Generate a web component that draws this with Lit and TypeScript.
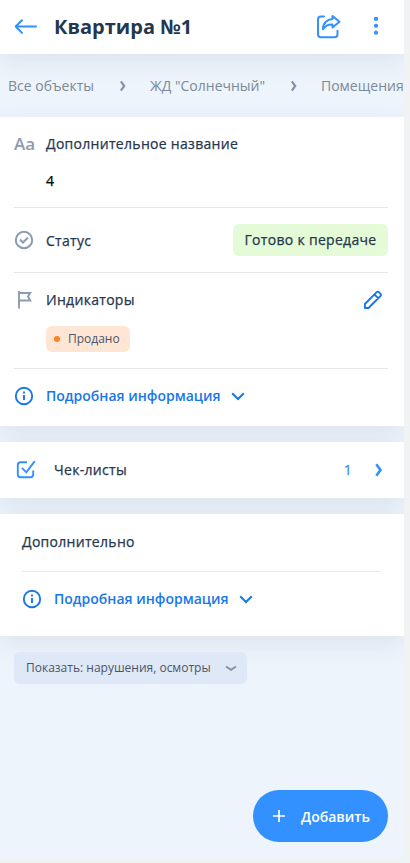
import { LitElement, html, css, svg } from "lit";
import { customElement } from "lit/decorators.js";

const infoIcon = svg`<svg class="ico" width="20" height="20" viewBox="0 0 20 20" fill="none" stroke="#1877e8" stroke-width="1.9"><circle cx="10" cy="10" r="8.2"/><path d="M10 8.9v5.2M10 5.6v1.9"/></svg>`;
const downIcon = svg`<svg class="down" width="14" height="9" viewBox="0 0 14 9" fill="none" stroke="#1877e8" stroke-width="2"><path d="M1.2 1.3L7 7l5.800-5.700"/></svg>`;
const crumbIcon = svg`<svg width="8" height="12" viewBox="0 0 8 12" fill="none" stroke="#8493a5" stroke-width="2.2"><path d="M1.900 1.400L5.200 6l-3.300 4.600"/></svg>`;

@customElement("app-root")
export class AppRoot extends LitElement {
  static styles = css`
    :host { display: block; height: 863px; background: #f1f2f4; overflow: hidden; font-family: "Open Sans", "Noto Sans", sans-serif; font-size: 14px; font-weight: 400; line-height: 20px; color: #25374e; }
    * { box-sizing: border-box; }
    svg { display: block; flex: none; }
    .page { position: relative; width: 404px; height: 858px; overflow: hidden; background: #edf4fc; }
    .page > header, .card { background: #fff; box-shadow: 0 8px 24px rgba(37, 55, 78, .085); }
    header { height: 54px; display: flex; align-items: center; padding: 0 20px 0 14px; }
    h1 { margin: 0 auto 0 16px; font-size: 20px; line-height: 28px; font-weight: 700; }
    .dots { margin-left: 27px; }
    nav { height: 63px; display: flex; align-items: center; padding-left: 8px; white-space: nowrap; color: #7d8997; }
    nav svg { margin: 0 23px 0 24.900px; }
    .main { height: 309px; padding: 0 16px 0 14px; }
    .name { height: 91px; padding-top: 17px; border-bottom: 1px solid #e6e7e9; }
    .row { display: flex; align-items: center; }
    .lead { width: 32px; flex: none; }
    .label, .value, .count, .state, .title { letter-spacing: .3px; -webkit-text-stroke: .25px currentColor; }
    .aa { font-size: 17px; font-weight: 600; color: #8b9bb0; }
    .value { margin: 17px 0 0 32px; color: #000; }
    .status { height: 65px; border-bottom: 1px solid #e6e7e9; }
    .status .label { padding-top: 1px; }
    .state { margin-left: auto; width: 155px; height: 32px; line-height: 32px; text-align: center; border-radius: 6px; background: #e5fbd7; }
    .flags { height: 96px; padding-top: 17px; border-bottom: 1px solid #e6e7e9; }
    .edit { margin: 0 5px 0 auto; }
    .tag { display: flex; align-items: center; width: 84px; height: 26px; margin: 16px 0 0 32px; padding-left: 8px; border-radius: 6px; background: #ffe5d4; font-size: 12px; color: #4a5668; }
    .dot { width: 6px; height: 6px; margin-right: 8px; border-radius: 50%; background: #ff7f23; }
    .more { height: 54px; color: #1877e8; font-weight: 600; }
    .more .ico { margin-right: 12px; }
    .down { margin: 1px 0 0 10.500px; }
    .checks { height: 56px; margin-top: 16px; padding: 0 21px 0 14px; }
    .checks .label { margin-left: 16px; }
    .count { margin: 0 22px 0 auto; color: #3290ff; }
    .extra { height: 122px; margin-top: 16px; padding: 0 24px 0 22px; }
    .title { height: 58px; padding-top: 18px; border-bottom: 1px solid #e6e7e9; }
    .filter { position: relative; width: 233px; height: 32px; margin: 16px 0 0 14px; padding: 0 10px 0 12px; justify-content: space-between; border-radius: 6px; background: #dfe8f7; font-size: 12px; color: #4a5668; }
    .add { position: absolute; right: 16px; bottom: 16px; width: 135px; height: 52px; padding-left: 20px; border-radius: 26px; background: #3290ff; color: #fff; font-weight: 600; }
    .add span { padding-top: 1px; }
    .add svg { margin: 0 16px 1px 0; }
  `;

  render() {
    return html`<div class="page">
      <header>
        <svg width="24" height="24" viewBox="0 0 24 24" fill="none" stroke="#3290ff" stroke-width="2" stroke-linecap="round" stroke-linejoin="round"><path d="M22 11.500H2M8 5.200L1.700 11.500 8 17.900"/></svg>
        <h1>Квартира №1</h1>
        <svg width="25" height="26" viewBox="0 0 25 26" fill="none" stroke="#3290ff" stroke-width="2" stroke-linecap="round" stroke-linejoin="round"><path d="M8 2.600H5Q2 2.600 2 5.600V20.200Q2 23.200 5 23.200H18.500Q21.500 23.200 21.500 20.200V16.800"/><path d="M16.500 2L23.500 7.800 16.500 13.500V10.600C12 10.300 9.500 11.500 7 15.300 6.800 9.200 11 5.500 16.500 5.100Z"/></svg>
        <svg class="dots" width="16" height="20" viewBox="0 0 16 20" fill="#3290ff"><circle cx="8" cy="1.900" r="2.100"/><circle cx="8" cy="8.800" r="2.100"/><circle cx="8" cy="15.700" r="2.100"/></svg>
      </header>
      <nav><span>Все объекты</span>${crumbIcon}<span>ЖД "Солнечный"</span>${crumbIcon}<span>Помещения</span></nav>
      <section class="card main">
        <div class="name"><div class="row"><span class="lead aa">Aa</span><span class="label">Дополнительное название</span></div><div class="value">4</div></div>
        <div class="row status"><span class="lead"><svg width="20" height="20" viewBox="0 0 20 20" fill="none" stroke="#8b9bb0" stroke-width="2"><circle cx="10" cy="10" r="8.200"/><path d="M6 9.500l3 3 5-5"/></svg></span><span class="label">Статус</span><span class="state">Готово к передаче</span></div>
        <div class="flags"><div class="row"><span class="lead"><svg width="20" height="20" viewBox="0 0 20 20" fill="none" stroke="#8b9bb0" stroke-width="1.900"><path d="M5 1V18.500M5 3H16.200L14 6.500 16.200 10.500H5"/></svg></span><span class="label">Индикаторы</span>
          <svg class="edit" width="20" height="20" viewBox="0 0 20 20" fill="none" stroke="#1877e8" stroke-width="1.900" stroke-linejoin="round"><path d="M1.900 18V14L13.700 2.200Q14.800 1.100 15.900 2.200L17.500 3.800Q18.600 4.900 17.500 6L5.500 18ZM11.500 4.500L15.300 8.300"/></svg></div>
          <div class="tag"><span class="dot"></span><span>Продано</span></div></div>
        <div class="row more">${infoIcon}<span>Подробная информация</span>${downIcon}</div>
      </section>
      <section class="card row checks">
        <svg width="24" height="24" viewBox="0 0 24 24" fill="none" stroke="#3290ff" stroke-width="1.900"><path d="M13 4.300H6.500Q3.800 4.300 3.800 7V16.500Q3.800 19.200 6.500 19.200H16.500Q19.200 19.200 19.200 16.500V12.500M8 9.800L12.300 14.300 20.800 3.200"/></svg>
        <span class="label">Чек-листы</span><span class="count">1</span>
        <svg width="9" height="14" viewBox="0 0 9 14" fill="none" stroke="#3290ff" stroke-width="2.600"><path d="M2.300 1.300L6.500 7l-4.200 5.700"/></svg>
      </section>
      <section class="card extra"><div class="title">Дополнительно</div><div class="row more">${infoIcon}<span>Подробная информация</span>${downIcon}</div></section>
      <div class="row filter"><span>Показать: нарушения, осмотры</span><svg width="12" height="8" viewBox="0 0 12 8" fill="none" stroke="#8493a5" stroke-width="2"><path d="M1 2.500l5 3.300 5-3.300"/></svg></div>
      <div class="row add"><svg width="12" height="12" viewBox="0 0 12 12" stroke="#fff" stroke-width="1.700"><path d="M6 0v12M0 6h12"/></svg><span>Добавить</span></div>
    </div>`;
  }
}
